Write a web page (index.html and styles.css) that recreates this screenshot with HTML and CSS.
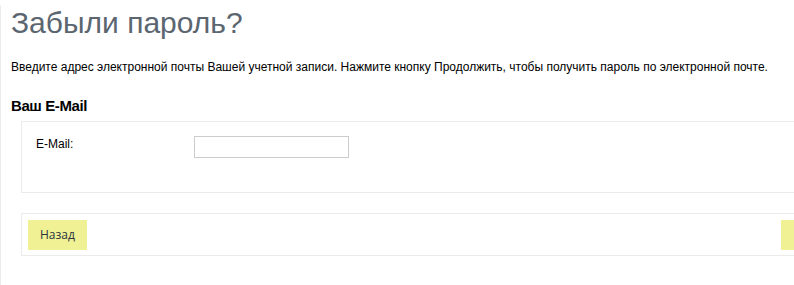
FILE: index.html
```html
<!DOCTYPE html>
<html lang="ru">
<head>
  <meta charset="UTF-8">
  <meta name="viewport" content="width=device-width, initial-scale=1.0">
  <title>Забыли пароль?</title>
  <link rel="stylesheet" href="styles.css">
</head>
<body>
  <div class="page">
    <h1 class="title">Забыли пароль?</h1>

    <p class="intro">Введите адрес электронной почты Вашей учетной записи. Нажмите кнопку Продолжить, чтобы получить пароль по электронной почте.</p>

    <form class="forgotten">
      <h2 class="legend">Ваш E-Mail</h2>
      <div class="box fields">
        <label class="field-label" for="email">E-Mail:</label>
        <input type="text" id="email" class="field-input">
      </div>

      <div class="box buttons">
        <a href="#" class="button">Назад</a>
        <button type="submit" class="button button-next">Продолжить</button>
      </div>
    </form>
  </div>
</body>
</html>
```

FILE: styles.css
```css
html, body {
  margin: 0;
  padding: 0;
  background: #ffffff;
  overflow: hidden;
}

body {
  font-family: "Liberation Sans", Arial, sans-serif;
  font-size: 12px;
  color: #000000;
}

.page {
  width: 920px;
  min-height: 285px;
  border-left: 1px solid #ececec;
  padding-left: 10px;
  box-sizing: border-box;
}

.title {
  margin: 5px 0 0;
  font-size: 30px;
  font-weight: normal;
  line-height: 35px;
  color: #5b6670;
}

.intro {
  margin: 20px 0 0;
  line-height: 14px;
}

.legend {
  margin: 23px 0 0;
  font-size: 15px;
  font-weight: bold;
  letter-spacing: -0.4px;
  line-height: 18px;
}

.box {
  margin-left: 10px;
  border: 1px solid #ebebeb;
}

.fields {
  margin-top: 6px;
  display: grid;
  grid-template-columns: 158px 155px;
  align-items: start;
  padding: 14px 14px 34px;
  height: 22px;
}

.field-label {
  margin-top: 1px;
  line-height: 14px;
}

.field-input {
  width: 155px;
  height: 22px;
  box-sizing: border-box;
  margin: 0;
  border: 1px solid #cccccc;
  padding: 2px 4px;
  font: inherit;
}

.buttons {
  width: 843px;
  margin-top: 20px;
  display: flex;
  justify-content: space-between;
  padding: 6px 6px 5px;
}

.button {
  display: inline-block;
  height: 30px;
  line-height: 30px;
  padding: 0 12px;
  background: #f0f094;
  border: 0;
  color: #2b3540;
  font-family: "Open Sans", "Liberation Sans", sans-serif;
  font-size: 12px;
  text-decoration: none;
}

.button-next {
  width: 90px;
  padding: 0 0 0 16px;
  text-align: left;
}
```
